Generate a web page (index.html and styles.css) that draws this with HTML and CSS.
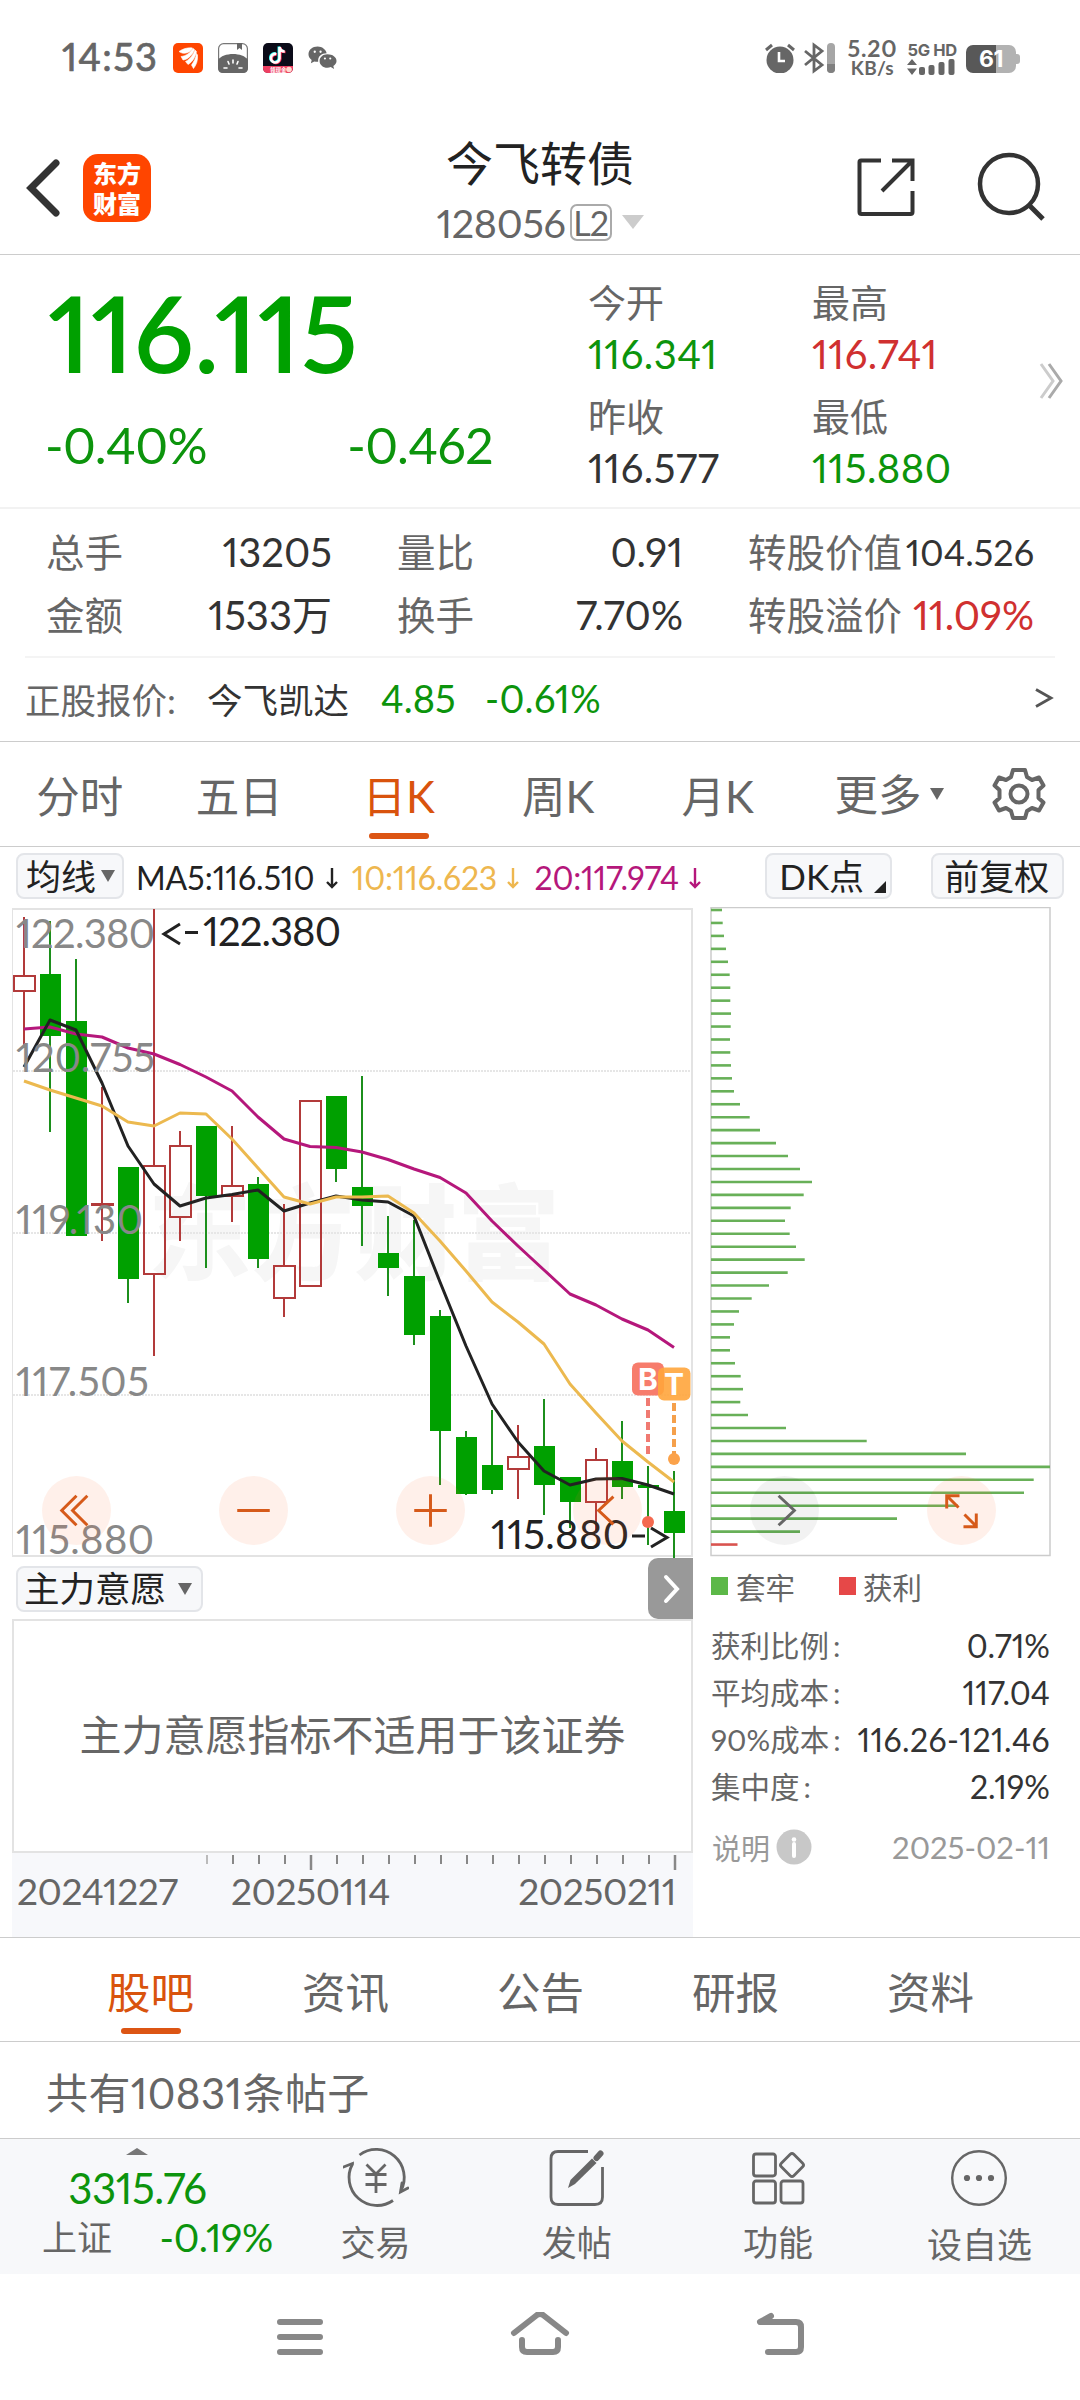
FILE: index.html
```
<!DOCTYPE html>
<html lang="zh-CN">
<head>
<meta charset="utf-8">
<title>今飞转债 128056</title>
<link rel="stylesheet" href="styles.css">
</head>
<body>
<div class="screen">

<div class="status">
  <div class="status-left">
    <span class="clock">14:53</span>
    <svg class="app" viewBox="0 0 30 30"><rect width="30" height="30" rx="5" fill="#ff4500"/><path d="M6 8.500C11 5 16 4.500 19.500 5L18.500 7C15 10.500 10 11.500 6 8.500ZM8 13.500C13 13 17 10 20 5.500L21.500 6.500C19.500 12 15 16.500 10 17ZM12.500 18.500C17 16.500 20 12 22 7L23.500 8.500C22.500 14 19.500 19 15 21.500ZM18.500 22C21 18.500 23 14.500 23.500 10.500L24.500 12C25 17 23.500 22 20.500 25.500Z" fill="#fff" stroke="#fff" stroke-width=".6"/></svg>
    <svg class="app" viewBox="0 0 30 30"><rect x=".6" y=".6" width="28.800" height="28.800" rx="5" fill="#fff" stroke="#777" stroke-width="1.200"/><path d="M19 0H24V7L21.500 5L19 7Z" fill="#666"/><path d="M0 17C5 9 25 9 30 17V25Q30 30 25 30H5Q0 30 0 25Z" fill="#666"/><g stroke="#fff" stroke-width="1.600" stroke-linecap="round"><path d="M15 17V20M10 18.500L11 21M20 18.500L19 21M6 25H9M21 25H24"/></g></svg>
    <svg class="app" viewBox="0 0 30 30"><rect width="30" height="30" rx="5" fill="#0b0b18"/><path d="M0 23H30V25Q30 30 25 30H5Q0 30 0 25Z" fill="#ee3f62"/><circle cx="26" cy="26.500" r="2.800" fill="#ffd9d0"/><g fill="none" stroke-width="2.600"><path d="M12.500 10.500A4.300 4.300 0 1 0 15.800 15V3.500C16.500 6.500 18.500 8 21 8" stroke="#25f4ee"/><path d="M14 11.500A4.300 4.300 0 1 0 17.300 16V4.500C18 7.500 20 9 22.500 9" stroke="#fe2c55"/><path d="M13.200 11A4.300 4.300 0 1 0 16.500 15.500V4C17.200 7 19.200 8.500 21.700 8.500" stroke="#fff"/></g><text x="7" y="29" font-size="5.500" font-weight="700" fill="#fff" class="cjk">领现金</text></svg>
    <svg class="wechat" viewBox="0 0 30 26"><path d="M10 1C4.500 1 .5 4.500.5 9C.5 11.500 1.800 13.500 3.800 15L3 18.500L6.500 16.500Q9 17 10.500 16.800C10 11 14 8 19.300 8C18.500 4 14.500 1 10 1Z" fill="#666"/><path d="M20 9C15.500 9 12 12 12 16C12 20 15.500 23 20 23Q22 23 23.500 22.300L27 24.500L26.200 21.200C28.200 20 29.500 18 29.500 16C29.500 12 25.500 9 20 9Z" fill="#666"/><g fill="#fff"><circle cx="7" cy="6.500" r="1.200"/><circle cx="13" cy="6.500" r="1.200"/><circle cx="17.500" cy="13.500" r="1.100"/><circle cx="23" cy="13.500" r="1.100"/></g></svg>
  </div>
  <div class="status-right">
    <svg width="30" height="30" viewBox="0 0 30 30"><circle cx="15" cy="17" r="13.500" fill="#666"/><path d="M1 7L7 2M29 7L23 2" stroke="#666" stroke-width="3"/><path d="M14 9V18H20" stroke="#fff" stroke-width="2.600" fill="none"/></svg>
    <svg class="bt" width="33" height="32" viewBox="0 0 33 32"><path d="M2 9L19 23L11 29V3L19 9L2 23" fill="none" stroke="#666" stroke-width="2.800"/><rect x="24" y="1" width="8" height="30" rx="4" fill="#a6a6a6"/><path d="M24 22H32V27A4 4 0 0 1 24 27Z" fill="#808080"/></svg>
    <div class="speed"><b>5.20</b><span>KB/s</span></div>
    <div class="net"><b>5G HD</b><svg width="48" height="16" viewBox="0 0 48 16"><path d="M5 0L10 6H0ZM5 16L10 9.500H0Z" fill="#666"/><g fill="#666"><rect x="12" y="8" width="6" height="8" rx="2"/><rect x="21.500" y="6" width="6" height="10" rx="2"/><rect x="31.500" y="3" width="6" height="13" rx="2"/><rect x="41.500" y="0" width="6" height="16" rx="2"/></g></svg></div>
    <div class="battery"><span>61</span></div>
  </div>
</div>

<header class="header">
  <div class="header-left">
    <svg width="36" height="60" viewBox="0 0 36 60"><path d="M31 5L6 30L31 55" fill="none" stroke="#333" stroke-width="7" stroke-linecap="round"/></svg>
    <div class="logo"><span>东方</span><span>财富</span></div>
  </div>
  <div class="title">
    <div class="title-name">今飞转债</div>
    <div class="title-code"><span>128056</span><span class="level">L2</span><i class="tri tri-light"></i></div>
  </div>
  <div class="header-right">
    <svg width="60" height="60" viewBox="0 0 60 60"><path d="M25 3.500H5Q3.500 3.500 3.500 5V55Q3.500 57 5.500 57H54.500Q56.500 57 56.500 55V34M36 3.500H56.500V24M56 4L26 34" fill="none" stroke="#333" stroke-width="4"/></svg>
    <svg width="70" height="72" viewBox="0 0 70 72"><circle cx="32" cy="33" r="29" fill="none" stroke="#333" stroke-width="4.500"/><path d="M52 54L66 68" stroke="#333" stroke-width="5"/></svg>
  </div>
</header>

<section class="quote">
  <div class="quote-main">
    <div class="price">116.115</div>
    <div class="change"><span>-0.40%</span><span>-0.462</span></div>
  </div>
  <div class="quote-stats">
    <div class="stat"><span>今开</span><b class="down">116.341</b></div>
    <div class="stat"><span>最高</span><b class="up">116.741</b></div>
    <div class="stat"><span>昨收</span><b>116.577</b></div>
    <div class="stat"><span>最低</span><b class="down">115.880</b></div>
  </div>
  <svg class="more" width="26" height="38" viewBox="0 0 26 38"><path d="M2 2L14 19L2 36" fill="none" stroke="#ccc" stroke-width="3"/><path d="M10 2L22 19L10 36" fill="none" stroke="#aaa" stroke-width="3"/></svg>
</section>

<section class="details">
  <div class="pair"><span>总手</span><b>13205</b></div>
  <div class="pair"><span>量比</span><b>0.91</b></div>
  <div class="pair"><span>转股价值</span><b class="small">104.526</b></div>
  <div class="pair"><span>金额</span><b>1533万</b></div>
  <div class="pair"><span>换手</span><b>7.70%</b></div>
  <div class="pair"><span>转股溢价</span><b class="up">11.09%</b></div>
</section>

<section class="underlying">
  <span class="u-label">正股报价:</span><span class="u-name">今飞凯达</span><span class="u-price">4.85</span><span class="u-pct">-0.61%</span>
  <svg width="20" height="22" viewBox="0 0 20 22"><path d="M2 2.500L17 11L2 19.500" fill="none" stroke="#555" stroke-width="2.800"/></svg>
</section>

<nav class="periods">
  <span>分时</span><span>五日</span><span class="active">日K</span><span>周K</span><span>月K</span><span class="more-tab">更多<i class="tri"></i></span>
  <svg width="54" height="54" viewBox="-27 -27 54 54"><path d="M-6 -24H6L8 -17L13 -14L20 -16.500L24.500 -8.500L19.500 -4V4L24.500 8.500L20 16.500L13 14L8 17L6 24H-6L-8 17L-13 14L-20 16.500L-24.500 8.500L-19.500 4V-4L-24.500 -8.500L-20 -16.500L-13 -14L-8 -17Z" fill="none" stroke="#666" stroke-width="4" stroke-linejoin="round"/><circle r="8.500" fill="none" stroke="#666" stroke-width="4"/></svg>
</nav>

<div class="toolbar">
  <span class="chip chip-ma">均线<i class="tri"></i></span>
  <span class="ma ma5">MA5:116.510<svg class="arr" viewBox="0 0 14 22"><path d="M7 1V20M2 15L7 20L12 15" /></svg></span>
  <span class="ma ma10">10:116.623<svg class="arr" viewBox="0 0 14 22"><path d="M7 1V20M2 15L7 20L12 15" /></svg></span>
  <span class="ma ma20">20:117.974<svg class="arr" viewBox="0 0 14 22"><path d="M7 1V20M2 15L7 20L12 15" /></svg></span>
  <span class="chip chip-dk">DK点<i class="corner"></i></span>
  <span class="chip chip-fq">前复权</span>
</div>

<main class="charts">
  <div class="left">
    <svg id="kline" class="kline" viewBox="12 907 681 651" width="681" height="651">
      <text class="watermark" x="148" y="1272" textLength="412">东方财富</text>
      <g class="frame"><path d="M12 909H692V1556H12Z"/></g>
      <g class="grid"><path d="M13 1071H691M13 1233H691M13 1395H691"/></g>
      <g id="candles"></g>
      <g id="averages"></g>
      <g class="scale">
        <text x="16" y="948" textLength="139">122.380</text>
        <text x="16" y="1072" textLength="139">120.755</text>
        <text x="16" y="1234" textLength="127">119.130</text>
        <text x="16" y="1396" textLength="133">117.505</text>
        <text x="16" y="1554" textLength="138">115.880</text>
      </g>
      <g class="mark">
        <text x="203" y="946" textLength="138">122.380</text>
        <path d="M180 924L164 934L180 944M185 932.500H198"/>
        <text x="491" y="1549" textLength="138">115.880</text>
        <path d="M632 1536H645M651 1528L667 1537.500L651 1547"/>
      </g>
      <g class="pin">
        <path d="M648 1398V1455" stroke="#f07a72"/><circle cx="648" cy="1522" r="6" fill="#f4694f"/>
        <rect x="632" y="1362.500" width="32" height="33" rx="6" fill="#f77c6c"/><text x="648" y="1390">B</text>
        <path d="M674 1403V1456" stroke="#f5a04b"/><circle cx="674" cy="1459" r="6" fill="#fba24a"/>
        <rect x="658" y="1367.500" width="32.500" height="33" rx="6" fill="#ffa53c" fill-opacity=".9"/><text x="674" y="1395">T</text>
      </g>
    </svg>
    <div class="indicator-bar">
      <span class="chip chip-ind">主力意愿<i class="tri"></i></span>
      <span class="expand"><svg width="18" height="30" viewBox="0 0 18 30"><path d="M3 3L14 15L3 27" fill="none" stroke="#fff" stroke-width="4" stroke-linecap="round"/></svg></span>
    </div>
    <div class="indicator">主力意愿指标不适用于该证券</div>
    <div class="axis">
      <svg id="ticks" width="681" height="18" viewBox="12 1852 681 18"></svg>
      <div class="dates"><span>20241227</span><span>20250114</span><span>20250211</span></div>
    </div>
  </div>
  <div class="right">
    <svg id="chips" class="chips" viewBox="710 907 342 651" width="342" height="651">
      <path d="M711 907.500H1050V1555.500H711Z" fill="none" stroke="#ccc" stroke-width="1.500"/>
    </svg>
    <div class="legend"><i class="sq sq-g"></i><span>套牢</span><i class="sq sq-r"></i><span>获利</span></div>
    <dl class="costs">
      <div><dt>获利比例<i>:</i></dt><dd>0.71%</dd></div>
      <div><dt>平均成本<i>:</i></dt><dd>117.04</dd></div>
      <div><dt>90%成本<i>:</i></dt><dd class="range">116.26-121.46</dd></div>
      <div><dt>集中度<i>:</i></dt><dd>2.19%</dd></div>
    </dl>
    <div class="note"><span>说明</span><svg width="36" height="36" viewBox="0 0 36 36"><circle cx="18" cy="18" r="17.500" fill="#c8c8c8"/><circle cx="18" cy="10.500" r="2.300" fill="#fff"/><path d="M18 15V27" stroke="#fff" stroke-width="4" stroke-linecap="round"/></svg><time>2025-02-11</time></div>
  </div>
  <div class="floats">
    <span class="float"><svg viewBox="-35 -35 70 70"><path d="M0 -15L-15 0L0 15M11 -15L-4 0L11 15"/></svg></span>
    <span class="float"><svg viewBox="-35 -35 70 70"><path d="M-16.500 0H16.500"/></svg></span>
    <span class="float"><svg viewBox="-35 -35 70 70"><path d="M-16.500 0H16.500M0 -16.500V16.500"/></svg></span>
    <span class="float"><svg viewBox="-35 -35 70 70"><path d="M6 -14L-9 0L6 14"/></svg></span>
    <span class="float float-off"><svg viewBox="-35 -35 70 70"><path d="M-6 -15L10 0L-6 15"/></svg></span>
    <span class="float"><svg viewBox="-35 -35 70 70"><path d="M-2 -15H-15V-2M-15 -15L-3 -3M2 16.500H15V3M15 16L3 4"/></svg></span>
  </div>
</main>

<nav class="boards"><span class="active">股吧</span><span>资讯</span><span>公告</span><span>研报</span><span>资料</span></nav>
<section class="posts">共有10831条帖子</section>

<footer class="bottom">
  <div class="index">
    <i class="up-tri"></i>
    <div class="index-value">3315.76</div>
    <div class="index-row"><span>上证</span><b>-0.19%</b></div>
  </div>
  <div class="action"><svg width="66" height="62" viewBox="-33 -31 66 62"><g fill="none" stroke="#666" stroke-width="2.800"><path d="M-16.500 -23A28 28 0 0 1 25 12.500M17 22.500A28 28 0 0 1 -23.500 -14"/><path d="M-32.500 -11L-23.500 -14.500V-14M32 10L24.500 14L26 5" stroke-linecap="round"/><path d="M-9.500 -13.500L0 -4L9.500 -13.500M0 -4V15M-10.500 -3.500H10.500M-10.500 6.500H10.500"/></g></svg><span>交易</span></div>
  <div class="action"><svg width="66" height="62" viewBox="-33 -31 66 62"><path d="M11 -26.500H-19Q-26 -26.500 -26 -19.500V19Q-26 26.500 -19 26.500H18Q25.500 26.500 25.500 19V-11" fill="none" stroke="#666" stroke-width="2.800"/><path d="M-9 10L-6.500 2L15 -19.500L19.500 -15L-2 6Z" fill="#666"/><path d="M19.500 -20L23.500 -24.500" stroke="#666" stroke-width="6" stroke-linecap="round"/></svg><span>发帖</span></div>
  <div class="action"><svg width="66" height="62" viewBox="-33 -31 66 62"><g fill="none" stroke="#666" stroke-width="2.800"><rect x="-24.500" y="-24" width="22" height="22" rx="2.500"/><rect x="-24.500" y="3" width="22" height="22" rx="2.500"/><rect x="3" y="3" width="22" height="22" rx="2.500"/><rect x="-8.800" y="-8.800" width="17.600" height="17.600" rx="2.500" transform="translate(14 -13) rotate(45)"/></g></svg><span>功能</span></div>
  <div class="action"><svg width="66" height="62" viewBox="-33 -31 66 62"><circle r="26.800" fill="none" stroke="#666" stroke-width="2.400"/><g fill="#666"><circle cx="-12" r="3.100"/><circle r="3.100"/><circle cx="12" r="3.100"/></g></svg><span class="low">设自选</span></div>
</footer>

<div class="sysnav">
  <svg width="60" height="50" viewBox="-30 -25 60 50"><path d="M-20 -15H20M-20 0H20M-20 15H20" /></svg>
  <svg width="60" height="50" viewBox="-30 -25 60 50"><path d="M-26 -4L-3 -22Q0 -24 3 -22L26 -4M-18 3V10Q-18 15 -13 15H13Q18 15 18 10V3"/></svg>
  <svg width="60" height="50" viewBox="-30 -25 60 50"><path d="M-9 -21L-20 -15H16Q21 -15 21 -10V10Q21 15 16 15H-12"/></svg>
</div>

</div>
<script src="charts.js"></script>
</body>
</html>
```
FILE: styles.css
```
* { box-sizing: border-box; }
body { margin: 0; background: #fff; }
i { font-style: normal; }
b { font-weight: 400; }
svg { display: block; flex: none; }

.screen {
  width: 1080px; height: 2400px; overflow: hidden;
  display: flex; flex-direction: column;
  font-family: Lato, "Noto Sans CJK SC", sans-serif;
  font-feature-settings: "pnum";
  color: #333; background: #fff;
  white-space: nowrap;
}
.screen > * { flex: none; }
.cjk { font-family: "Noto Sans CJK SC", sans-serif; }
.up { color: #d03030 !important; }
.down { color: #0c940c !important; }

/* triangles */
.tri { display: inline-block; border: 7px solid transparent; border-top: 12px solid #666; border-bottom: 0; }
.tri-light { border-width: 14px 11px 0; border-top-color: #ccc; }
.corner { display: inline-block; border: 6px solid; border-color: transparent #222 #222 transparent; }

/* status bar */
.status { height: 115px; padding: 0 65px 0 62px; display: flex; justify-content: space-between; align-items: center; color: #666; }
.status-left, .status-right { display: flex; align-items: center; }
.clock { font-size: 38px; line-height: 40px; width: 111px; letter-spacing: 1.3px; margin-bottom: 4px; -webkit-text-stroke: .7px #666; }
.app { width: 30px; height: 30px; margin-right: 15px; }
.wechat { width: 29px; height: 26px; }
.bt { margin-left: 8px; }
.speed { margin-left: 11px; width: 50px; display: flex; flex-direction: column; align-items: center; line-height: 20px; }
.speed b { font-size: 23px; font-weight: 700; letter-spacing: .8px; }
.speed span { font-size: 19px; font-weight: 700; letter-spacing: .3px; }
.net { margin-left: 10px; display: flex; flex-direction: column; }
.net b { font: 700 16.500px/18px Inter, sans-serif; letter-spacing: -.3px; }
.battery { margin: 2px -1px 0 9px; width: 50px; height: 28px; border-radius: 7px; background: linear-gradient(90deg, #585858 60%, #b2b2b2 60%); position: relative; display: flex; align-items: center; justify-content: center; color: #fff; }
.battery::after { content: ""; position: absolute; left: 50px; top: 9px; width: 4px; height: 10px; background: #b2b2b2; border-radius: 0 3px 3px 0; }
.battery span { font: 700 23px/28px Inter, sans-serif; letter-spacing: -.5px; }

/* title bar */
.header { height: 140px; border-bottom: 1px solid #ccc; display: grid; grid-template-columns: 1fr auto 1fr; padding: 0 33px 0 25px; }
.header-left { display: flex; align-items: center; gap: 22px; height: 146px; }
.logo { width: 68px; height: 68px; border-radius: 15px; background: #ff4500; color: #fff; display: flex; flex-direction: column; align-items: center; justify-content: center; font: 900 24px/30px "Noto Sans CJK SC", sans-serif; }
.title { text-align: center; padding-left: 8px; }
.title-name { font-size: 47px; line-height: 60px; margin-top: 18px; color: #222; }
.title-code { display: flex; align-items: center; justify-content: center; height: 58px; font-size: 39.500px; line-height: 57px; letter-spacing: -.3px; color: #666; }
.level { margin-left: 4px; width: 42px; height: 37px; border: 2px solid #aaa; border-radius: 7px; font-size: 34px; line-height: 33px; letter-spacing: -1px; }
.title-code .tri { margin-left: 10px; }
.header-right { display: flex; justify-content: flex-end; align-items: center; gap: 61px; height: 144px; }

/* quote */
.quote { height: 254px; border-bottom: 2px solid #f2f2f2; display: flex; }
.quote-main { width: 588px; padding: 25px 0 0 45px; color: #0c940c; }
.price { padding-left: 3px; font-size: 105px; line-height: 104px; letter-spacing: .5px; font-weight: 600; color: #00a000; }
.change { margin-top: 31px; width: 448px; display: flex; justify-content: space-between; font-size: 50px; line-height: 60px; letter-spacing: -.6px; }
.quote-stats { display: grid; grid-template-columns: 224px 226px; grid-auto-rows: 102px; row-gap: 12px; padding-top: 24px; }
.stat { display: flex; flex-direction: column; }
.stat span { font-size: 38px; line-height: 47px; color: #666; }
.stat b { font-size: 40px; line-height: 57px; letter-spacing: .5px; }
.more { margin: 107px 0 0 1px; }

/* details */
.details { height: 149px; margin: 0 25px; padding: 12px 21px 0; border-bottom: 2px solid #f4f4f4; display: grid; grid-template-columns: repeat(3, 286px); column-gap: 65px; grid-auto-rows: 63px; }
.pair { display: flex; justify-content: space-between; line-height: 63px; color: #333; }
.pair span { font-size: 38.500px; color: #666; }
.pair b { font-size: 40px; }
.pair .small { font-size: 36px; }

.underlying { height: 84px; padding: 0 26px 3px 25px; border-bottom: 1px solid #ccc; display: flex; align-items: center; font-size: 35.500px; color: #333; }
.u-label { width: 182px; color: #666; }
.u-name { width: 174px; }
.u-price { width: 104px; font-size: 38px; color: #0c940c; }
.u-pct { font-size: 38px; color: #0c940c; flex: 1; letter-spacing: .4px; }

/* period tabs */
.periods { height: 105px; border-bottom: 1px solid #ccc; display: flex; align-items: center; font-size: 43.500px; color: #666; }
.periods span { width: 159.500px; height: 103px; line-height: 106px; text-align: center; }
.periods .more-tab { width: 183px; display: flex; align-items: center; justify-content: center; }
.more-tab .tri { margin-left: 8px; }
.periods svg { margin-left: 11px; }
.active { color: #d9530d; position: relative; }
.active::after { content: ""; position: absolute; left: 50%; bottom: 7px; width: 60px; height: 6px; margin-left: -30px; border-radius: 3px; background: #dc5514; }

/* chart toolbar */
.toolbar { height: 60px; padding: 6px 16px 0; display: flex; align-items: flex-start; font-size: 32px; }
.chip { height: 46px; border: 2px solid #e3e5e9; border-radius: 8px; background: #f7f8fa; color: #222; font-size: 35px; line-height: 42px; display: flex; align-items: center; }
.chip-ma { width: 108px; padding-left: 8px; margin-right: 12px; }
.chip-ma .tri { margin-left: 5px; }
.ma { line-height: 50px; display: flex; align-items: center; color: #222; }
.ma5 { width: 216px; }
.ma10 { width: 183px; color: #eeb74f; }
.ma20 { width: 231px; color: #b5177b; }
.ma20, .ma10 { letter-spacing: -.2px; }
.arr { width: 14px; height: 22px; margin-left: 10px; fill: none; stroke: currentColor; stroke-width: 2.400; }
.ma10 .arr, .ma20 .arr { margin-left: 9px; }
.chip-dk { width: 127px; padding-left: 12px; position: relative; }
.chip-dk .corner { position: absolute; right: 4px; bottom: 4px; }
.chip-fq { width: 133px; margin-left: 39px; padding-left: 11px; }

/* charts */
.charts { height: 1030px; padding: 0 28px 0 12px; display: flex; position: relative; }
.left { width: 681px; margin-right: 17px; }
.right { width: 342px; }
.kline text { font-size: 40px; }
.kline .watermark { font: 900 103px "Noto Sans CJK SC", sans-serif; fill: #f6f6f6; }
.frame path { fill: none; stroke: #e3e3e3; stroke-width: 2; }
.grid path { stroke: #e6e6e6; stroke-width: 2; stroke-dasharray: 2 1; }
.scale { fill: #888; }
.mark { fill: #222; }
.mark path { fill: none; stroke: #222; stroke-width: 3; }
.pin path { stroke-width: 4; stroke-dasharray: 8 4; }
.kline .pin text { font: 700 30px Inter, sans-serif; fill: #fff; text-anchor: middle; }
#averages path { fill: none; stroke-width: 3; stroke-linejoin: round; }

.indicator-bar { height: 61px; display: flex; justify-content: space-between; align-items: flex-start; }
.chip-ind { width: 187px; margin: 8px 0 0 4px; padding-left: 6px; font-size: 35.500px; line-height: 40px; }
.chip-ind .tri { margin-left: 12px; }
.expand { width: 45px; height: 61px; border-radius: 10px 0 0 10px; background: #999; display: flex; align-items: center; padding-left: 15px; }
.indicator { width: 681px; height: 234px; border: 2px solid #e3e3e3; font-size: 42px; line-height: 228px; text-align: center; color: #666; }
.axis { height: 84px; background: #f7f8fb; }
.dates { display: flex; padding: 0 17px 0 5px; font-size: 37px; line-height: 40px; letter-spacing: -.4px; color: #666; }
.dates span { width: 214px; }
.dates span:last-child { margin-left: auto; width: auto; }

.legend { height: 54px; padding: 2px 0 0 1px; display: flex; align-items: center; font-size: 29.500px; color: #666; }
.sq { width: 17px; height: 18px; margin-right: 8px; }
.sq-g { background: #5cb848; }
.sq-r { background: #e64848; margin-left: 44px; margin-right: 7px; }
.costs { margin: 10px 2px 0 1px; }
.costs div { height: 47px; display: flex; justify-content: space-between; line-height: 47px; }
.costs dt { font-size: 29.500px; color: #666; display: flex; }
.costs dt i { margin-left: 4px; }
.costs dd { margin: 0; font-size: 32px; color: #333; }
.costs .range { letter-spacing: .4px; }
.note { height: 60px; margin: 7px 2px 0 2px; display: flex; align-items: center; font-size: 29px; color: #999; }
.note svg { margin-left: 6px; }
.note time { margin-left: auto; font-size: 31px; }

.floats { position: absolute; left: 42px; top: 569px; display: flex; gap: 108px; }
.float { width: 69px; height: 69px; border-radius: 50%; background: rgba(255, 110, 50, .1); }
.float svg { width: 69px; height: 69px; fill: none; stroke: #d65a1a; stroke-width: 3; }
.float-off { background: rgba(0, 0, 0, .05); }
.float-off svg { stroke: #666; }

/* board tabs */
.boards { height: 105px; border: solid #ccc; border-width: 1px 0; padding: 0 52px 0 53px; display: flex; font-size: 43.500px; color: #666; }
.boards span { flex: 1; line-height: 108px; text-align: center; }
.posts { height: 96px; padding-left: 46px; font-size: 42px; line-height: 102px; letter-spacing: .4px; color: #666; }

/* bottom bar */
.bottom { height: 136px; border-top: 1px solid #ccc; background: #f7f8fa; display: flex; }
.index { width: 275px; padding-top: 9px; display: flex; flex-direction: column; align-items: center; color: #0c940c; }
.up-tri { border: solid transparent; border-width: 0 11px 7px; border-bottom-color: #777; }
.index-value { margin-top: 7px; font-size: 42px; line-height: 52px; letter-spacing: -.5px; }
.index-row { align-self: flex-start; width: 231px; margin-left: 42px; display: flex; justify-content: space-between; align-items: center; line-height: 46px; }
.index-row span { font-size: 35px; color: #666; }
.index-row b { font-size: 39px; letter-spacing: -.3px; }
.action { width: 201.300px; padding-top: 8px; display: flex; flex-direction: column; align-items: center; font-size: 35px; line-height: 50px; color: #666; }
.action span { margin-top: 8px; }
.action .low { margin-top: 10px; }

/* system navigation */
.sysnav { height: 126px; display: flex; justify-content: center; gap: 180px; padding-top: 38px; }
.sysnav path { fill: none; stroke: #888; stroke-width: 6; stroke-linecap: round; stroke-linejoin: round; }
```
FILE: charts.js
```
const NS = 'http://www.w3.org/2000/svg';
const STEP = 26, X0 = 24;

function add(parent, tag, attrs) {
  const el = document.createElementNS(NS, tag);
  for (const key in attrs) el.setAttribute(key, attrs[key]);
  parent.appendChild(el);
}

// one row per day: direction, wick top, body top, body bottom, wick bottom
const days = [
  ['r', 917, 976, 991, 1048], ['g', 921, 974, 1036, 1132], ['g', 959, 1021, 1236, 1236],
  ['r', 1087, 1204, 1205, 1241], ['g', 1167, 1167, 1279, 1303], ['r', 909, 1166, 1274, 1356],
  ['r', 1131, 1146, 1217, 1241], ['g', 1126, 1126, 1196, 1268], ['r', 1126, 1186, 1196, 1222],
  ['g', 1177, 1184, 1259, 1268], ['r', 1204, 1266, 1298, 1317], ['r', 1101, 1101, 1286, 1286],
  ['g', 1096, 1096, 1169, 1182], ['g', 1076, 1187, 1206, 1246], ['g', 1216, 1253, 1268, 1296],
  ['g', 1220, 1276, 1335, 1345], ['g', 1310, 1316, 1431, 1485], ['g', 1431, 1437, 1494, 1495],
  ['g', 1410, 1465, 1490, 1494], ['r', 1425, 1457, 1469, 1499], ['g', 1399, 1446, 1485, 1515],
  ['g', 1477, 1477, 1502, 1528], ['r', 1448, 1460, 1502, 1532], ['g', 1421, 1461, 1487, 1499],
  ['g', 1466, 1485, 1488, 1545], ['g', 1471, 1511, 1533, 1558]
];
const candles = document.getElementById('candles');
days.forEach(([dir, high, top, bottom, low], i) => {
  const x = X0 + i * STEP;
  if (dir === 'g') {
    add(candles, 'path', { d: `M${x} ${high}V${low}`, stroke: '#1c8f1c', 'stroke-width': 2 });
    add(candles, 'rect', { x: x - 10, y: top, width: 21, height: bottom - top, fill: '#00a000' });
  } else {
    add(candles, 'path', { d: `M${x} ${high}V${top}M${x} ${bottom}V${low}`, stroke: '#b23a3a', 'stroke-width': 2 });
    add(candles, 'rect', { x: x - 10, y: top, width: 21, height: bottom - top, fill: 'none', stroke: '#b23a3a', 'stroke-width': 2 });
  }
});

const averages = [
  ['#b5177b', [1029, 1027, 1034, 1037, 1048, 1054, 1064.5, 1077, 1091, 1117, 1139, 1146.5, 1147.5, 1152, 1159.5, 1169, 1177.5, 1193, 1221, 1246, 1270, 1294, 1305, 1319, 1330, 1347.500]],
  ['#222', [1067, 1020, 1030, 1083, 1146, 1184, 1206, 1198, 1194.5, 1190, 1211, 1203, 1196, 1200, 1202, 1216, 1282, 1346, 1404, 1442, 1471, 1485, 1479, 1478.5, 1485, 1494]],
  ['#ecb94f', [1081, 1090, 1098, 1106, 1122, 1126, 1113, 1114, 1139, 1168, 1197, 1204, 1197, 1197, 1196, 1213, 1241, 1271, 1302, 1322, 1344, 1384, 1413, 1441, 1462, 1482]]
];
averages.forEach(([color, ys]) => {
  add(document.getElementById('averages'), 'path', {
    d: 'M' + ys.map((y, i) => `${X0 + i * STEP} ${y}`).join('L'), stroke: color
  });
});

// cost distribution, widths in pixels from the highest price down
const widths = [11, 11.7, 13, 15, 17, 18.7, 19.3, 19.3, 20, 19.7, 19, 19.3, 20, 21, 23, 29, 38.7, 49, 65, 77,
  89, 101, 92.7, 79.7, 74, 78.7, 85, 93.7, 76.7, 58, 40.7, 28, 23, 19, 19, 24, 29.7, 32, 29.3, 37,
  75, 155.7, 255, 339, 322.7, 313, 247, 186, 89, 26.500];
const chips = document.getElementById('chips');
widths.forEach((w, i) => {
  add(chips, 'path', {
    d: `M711 ${910 + i * 12.95}h${w}`, 'stroke-width': 2.6,
    stroke: i === widths.length - 1 ? '#d9534f' : '#68b058'
  });
});

const ticks = document.getElementById('ticks');
for (let i = 0; i < 19; i++) {
  const major = i === 4 || i === 18;
  add(ticks, 'path', {
    d: `M${207 + i * 26} 1854V${major ? 1869 : 1863}`,
    stroke: i === 0 ? '#bbb' : '#888', 'stroke-width': major ? 2.5 : 2
  });
}
```
